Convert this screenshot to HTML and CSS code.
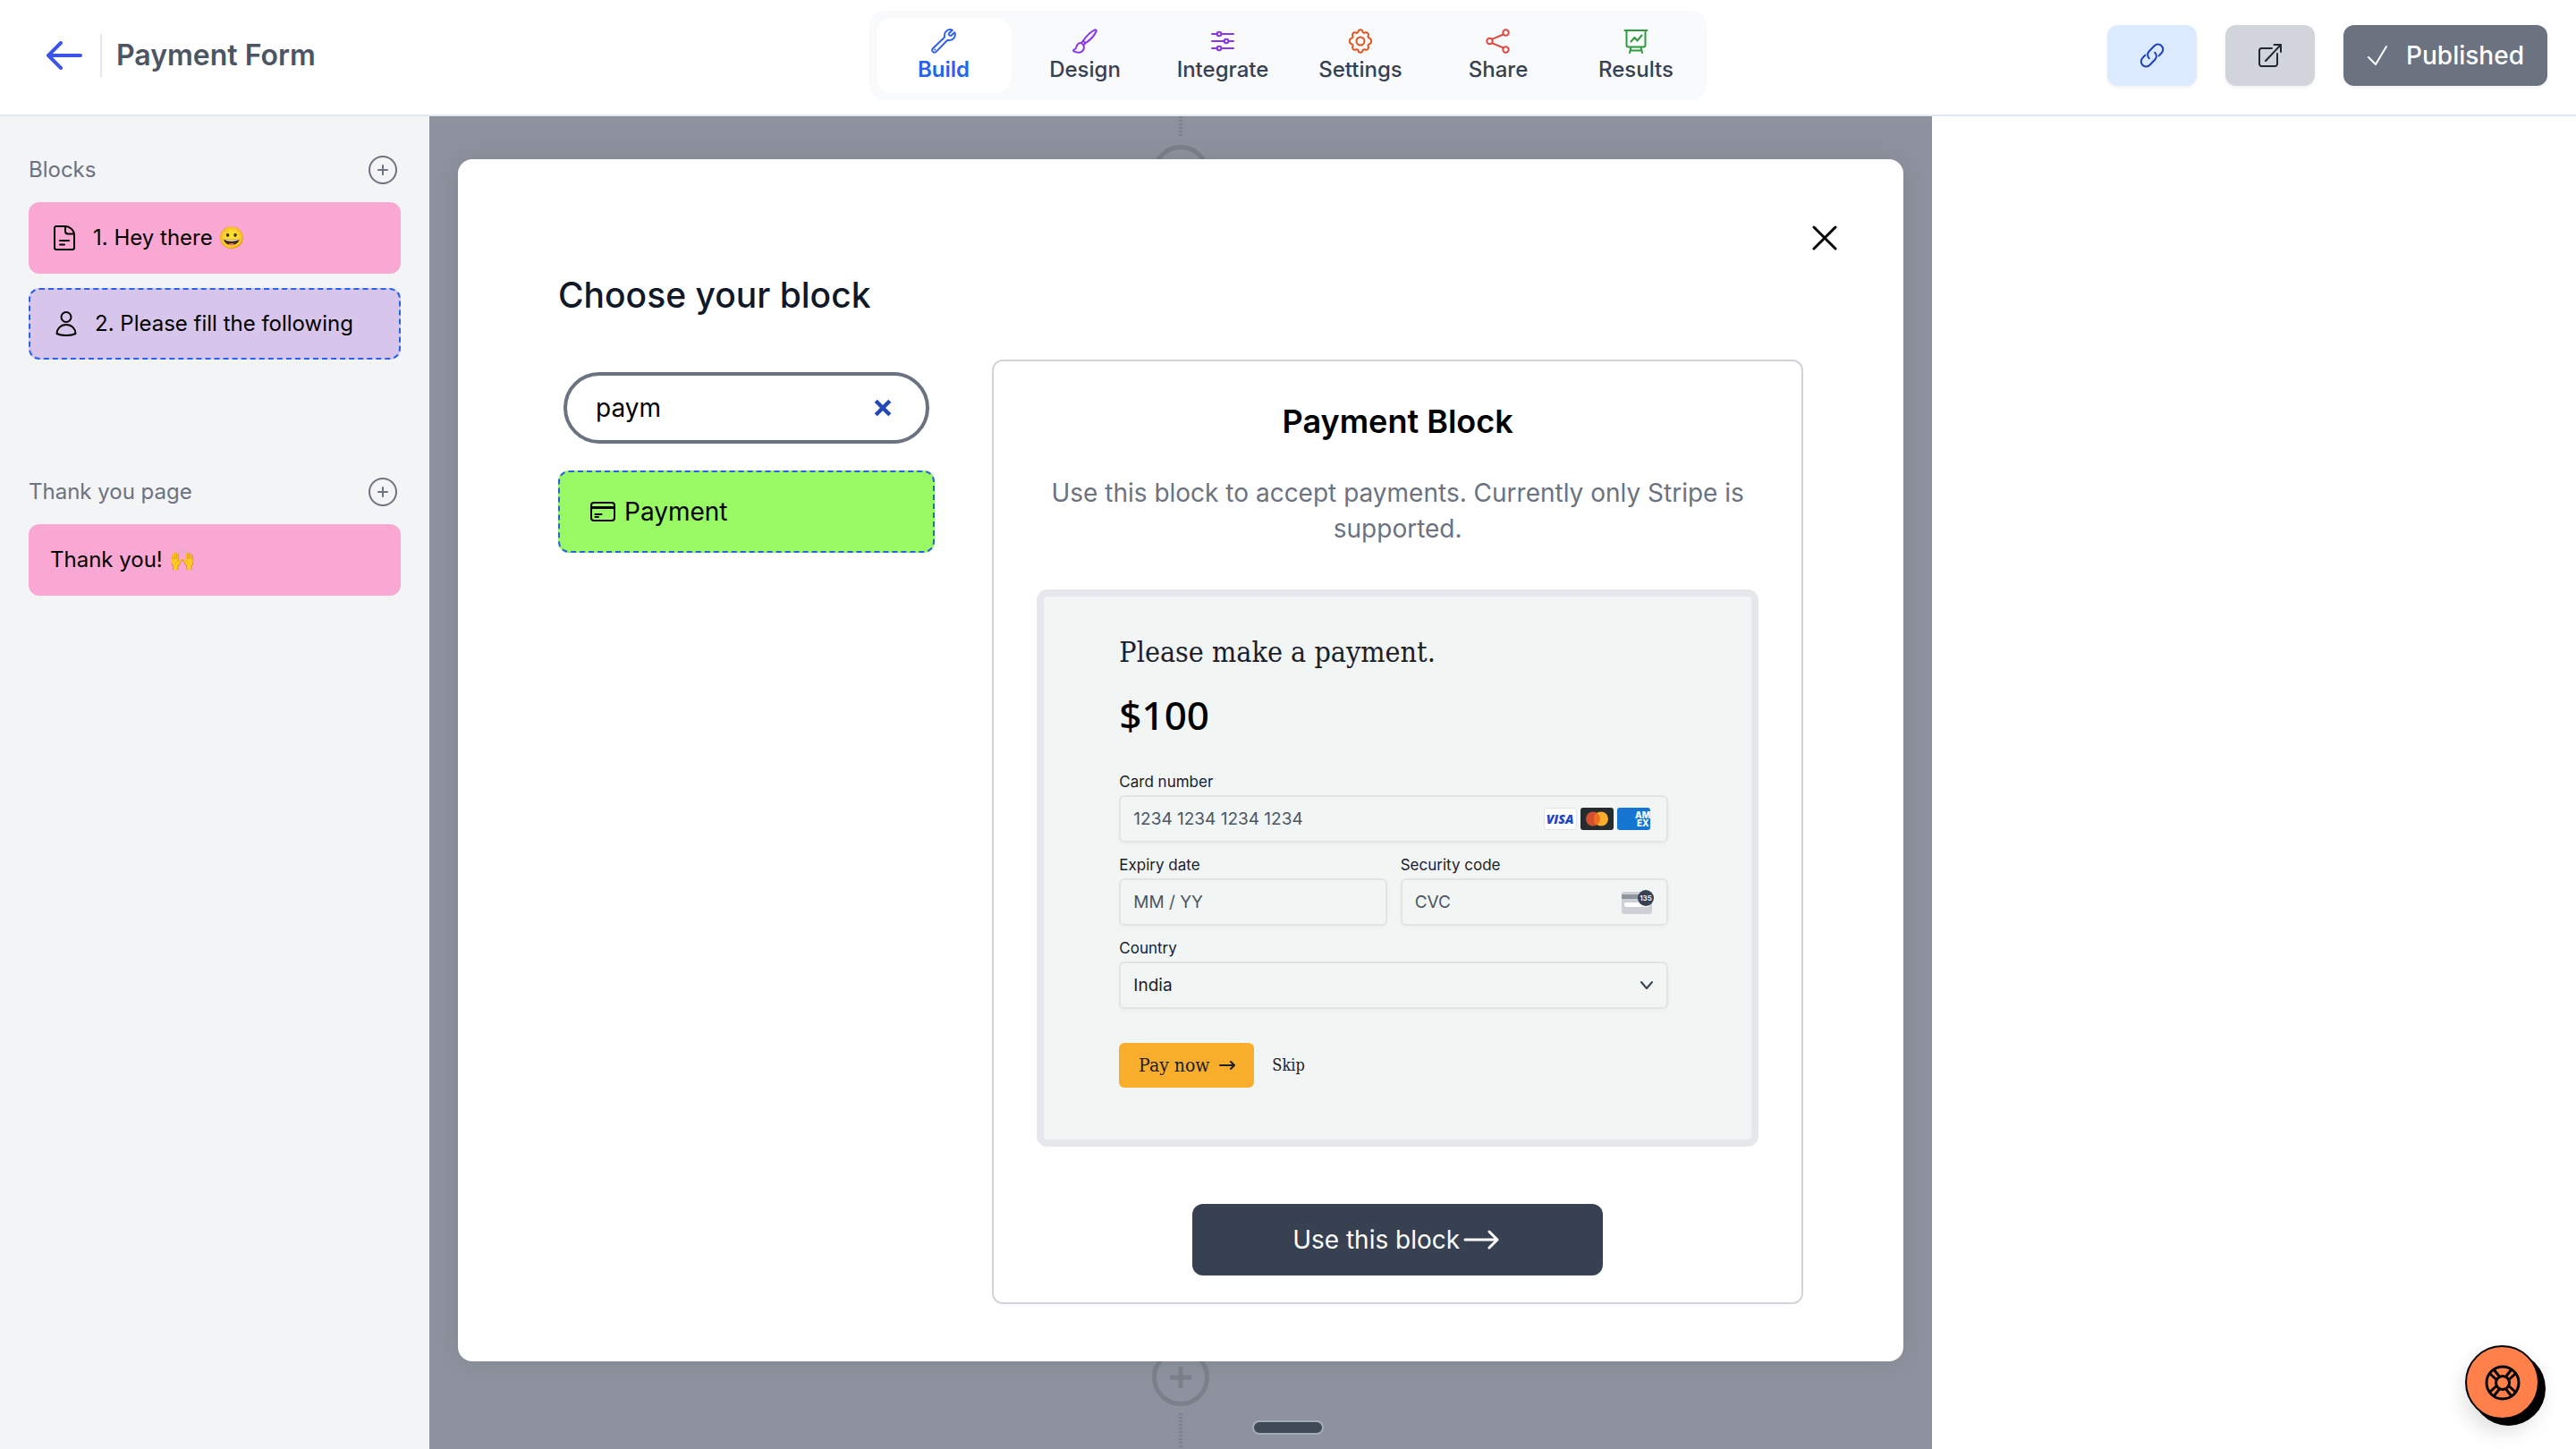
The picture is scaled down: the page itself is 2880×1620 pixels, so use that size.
FILE: index.html
```html
<!DOCTYPE html>
<html lang="en">
<head>
<meta charset="utf-8">
<meta name="viewport" content="width=device-width, initial-scale=1">
<title>Payment Form</title>
<link rel="stylesheet" href="styles.css">
</head>
<body>
<header class="topbar">
  <div class="crumb">
    <a class="back" href="#" aria-label="Back"><svg width="40" height="32" viewBox="0 0 40 32" fill="none" stroke="currentColor" stroke-width="4" stroke-linecap="round" stroke-linejoin="round"><path d="M16 2 2 16l14 14M2 16h36"/></svg></a>
    <h1 class="form-name">Payment Form</h1>
  </div>
  <nav class="tabs">
    <a class="tab active" href="#"><svg class="ico blue" viewBox="0 0 28 28"><path d="M23.8 1.7A6.3 6.3 0 0 0 15 8.500c.1.700-.1 1.300-.6 1.800L1.900 22.200a2.600 2.600 0 0 0 3.700 3.700L17.600 13.500c.5-.5 1.100-.7 1.800-.6a6.300 6.300 0 0 0 6.900-8.700l-3.600 3.400c-.6.600-1.400.500-2 0l-.5-.5c-.5-.6-.5-1.400 0-2z"/><path d="M4.300 23.500h.1"/></svg>Build</a>
    <a class="tab" href="#"><svg class="ico purple" viewBox="0 0 28 28"><path d="M12 13.500C16 8 21 3.300 25 1.400c1.100-.4 2 .5 1.600 1.600C24.700 7.500 20 12.500 14.600 16.300M12 13.500l2.600 2.800M12 13.500l-2 2.600 2.200 2.300 2.400-2.100M10 16.100c-2.500-.5-4.700 1-5.300 3.500-.4 2-1.200 3.300-3.100 4.100-.8.400-.7 1.200 0 1.600 3.300 1.800 7.400 1.900 9.600-.3 1.800-1.800 2.100-4.200 1-6.600z"/></svg>Design</a>
    <a class="tab" href="#"><svg class="ico purple" viewBox="0 0 28 28"><path d="M2 6h6M12.500 6H26M2 14h14M20.500 14H26M2 22h6M12.500 22H26"/><circle cx="10" cy="6" r="2.300"/><circle cx="18" cy="14" r="2.300"/><circle cx="10" cy="22" r="2.300"/></svg>Integrate</a>
    <a class="tab" href="#"><svg class="ico orange" viewBox="0 0 28 28"><path d="M11.600 3.100C12.100.6 15.900.6 16.400 3.100c.3 1.400 1.400 2 2.700 1.400 2.400-1.100 4.500 1 3.600 3.400-.5 1.400.1 2.600 1.500 3 2.500.6 2.500 5.600 0 6.200-1.400.4-2 1.600-1.500 3 .9 2.400-1.200 4.500-3.600 3.400-1.300-.6-2.400 0-2.700 1.400-.5 2.500-4.300 2.500-4.800 0-.3-1.400-1.400-2-2.700-1.400-2.400 1.100-4.500-1-3.600-3.400.5-1.400-.1-2.600-1.500-3-2.500-.6-2.500-5.600 0-6.200 1.400-.4 2-1.600 1.500-3-.9-2.400 1.200-4.500 3.600-3.400 1.300.6 2.400 0 2.700-1.400z"/><circle cx="14" cy="14" r="4.500"/></svg>Settings</a>
    <a class="tab" href="#"><svg class="ico red" viewBox="0 0 28 28"><circle cx="4.500" cy="14" r="3.200"/><circle cx="22.500" cy="4.500" r="3.200"/><circle cx="22.500" cy="23.500" r="3.200"/><path d="M7 11.800 19.800 6.500M7 16.200l12.800 5.300"/></svg>Share</a>
    <a class="tab" href="#"><svg class="ico green" viewBox="0 0 28 28"><path d="M1.500 2h25M3.500 2v16.500a2 2 0 0 0 2 2h17a2 2 0 0 0 2-2V2M8.500 20.500 7 27M19.500 20.500 21 27M8 24.500h12M8.500 14.500l4-4.500 3 3.500 5-6"/></svg>Results</a>
  </nav>
  <div class="actions">
    <button class="btn btn-link" aria-label="Copy link"><svg width="28" height="28" viewBox="0 0 28 28" fill="none" stroke="currentColor" stroke-width="2" stroke-linecap="round" stroke-linejoin="round"><path d="M10.800 17.200a5.600 5.600 0 0 1 0-8l5.800-6a5.600 5.600 0 0 1 8 8l-3 3.200"/><path d="M17.200 10.800a5.600 5.600 0 0 1 0 8l-5.800 6a5.600 5.600 0 0 1-8-8l3-3.200"/></svg></button>
    <button class="btn btn-open" aria-label="Open form"><svg width="28" height="28" viewBox="0 0 28 28" fill="none" stroke="currentColor" stroke-width="2" stroke-linecap="round" stroke-linejoin="round"><path d="M16 6H4.500A2.500 2.500 0 0 0 2 8.500v15A2.500 2.500 0 0 0 4.500 26h15a2.500 2.500 0 0 0 2.500-2.500V12M9 20 26 2M18.500 2H26v8"/></svg></button>
    <button class="btn btn-published"><svg width="24" height="24" viewBox="0 0 24 24" fill="none" stroke="currentColor" stroke-width="2" stroke-linecap="round" stroke-linejoin="round"><path d="m2 14 8 8L22 2"/></svg>Published</button>
  </div>
</header>

<div class="workspace">
  <aside class="sidebar">
    <section class="group">
      <div class="group-head"><h2>Blocks</h2><button class="add" aria-label="Add block"><svg width="34" height="34" viewBox="0 0 34 34" fill="none" stroke="currentColor" stroke-width="2" stroke-linecap="round"><circle cx="17" cy="17" r="15"/><path d="M17 12v10M12 17h10"/></svg></button></div>
      <a class="item pink" href="#"><svg class="item-ico" viewBox="0 0 24 28"><path d="M13 1H3a2 2 0 0 0-2 2v22a2 2 0 0 0 2 2h18a2 2 0 0 0 2-2V10.500C23 5.500 18 1 13 1v5.500A3 3 0 0 0 16 9.500h6.800M7 17h10M7 21.500h5"/></svg>1. Hey there 😀</a>
      <a class="item violet" href="#"><svg class="item-ico" viewBox="0 0 24 28"><circle cx="12" cy="6.500" r="5.500"/><path d="M1.500 25c0-5 4-10 10.500-10s10.500 5 10.500 10c-5.500 2.700-15.500 2.700-21 0z"/></svg>2. Please fill the following</a>
    </section>
    <section class="group">
      <div class="group-head"><h2>Thank you page</h2><button class="add" aria-label="Add thank you page"><svg width="34" height="34" viewBox="0 0 34 34" fill="none" stroke="currentColor" stroke-width="2" stroke-linecap="round"><circle cx="17" cy="17" r="15"/><path d="M17 12v10M12 17h10"/></svg></button></div>
      <a class="item pink" href="#">Thank you! 🙌</a>
    </section>
  </aside>

  <main class="canvas">
    <div class="flow flow-top"><span class="line line-top"></span><span class="node"></span></div>
    <div class="flow flow-bottom"><span class="node"><svg width="24" height="24" viewBox="0 0 24 24" fill="none" stroke="currentColor" stroke-width="5" stroke-linecap="round"><path d="M12 2v20M2 12h20"/></svg></span><span class="line line-bottom"></span></div>
    <span class="handle"></span>

    <div class="modal" role="dialog" aria-labelledby="modal-title">
      <button class="close" aria-label="Close"><svg width="28" height="28" viewBox="0 0 28 28" fill="none" stroke="currentColor" stroke-width="3" stroke-linecap="round"><path d="m2 2 24 24M26 2 2 26"/></svg></button>
      <h2 class="modal-title" id="modal-title">Choose your block</h2>
      <div class="modal-grid">
        <div class="picker">
          <div class="search">
            <input type="text" value="paym" aria-label="Search blocks">
            <button class="clear" aria-label="Clear search"><svg width="20" height="20" viewBox="0 0 18 18" fill="none" stroke="currentColor" stroke-width="4"><path d="m2 2 14 14M16 2 2 16"/></svg></button>
          </div>
          <button class="choice"><svg width="28" height="22" viewBox="0 0 28 22" fill="none" stroke="currentColor" stroke-width="2" stroke-linecap="round"><rect x="1" y="1" width="26" height="20" rx="3"/><path d="M1 6.500h26" stroke-width="3" stroke-linecap="butt"/><path d="M5.500 14h7M5.500 17h3.500"/></svg>Payment</button>
        </div>

        <section class="detail">
          <h3 class="detail-title">Payment Block</h3>
          <p class="detail-text">Use this block to accept payments. Currently only Stripe is supported.</p>
          <form class="preview">
            <h4 class="pay-title">Please make a payment.</h4>
            <p class="amount">$100</p>
            <div class="fields">
              <div class="field wide">
                <label for="card">Card number</label>
                <div class="box">
                  <input id="card" type="text" placeholder="1234 1234 1234 1234">
                  <span class="brands">
                    <svg width="37" height="25" viewBox="0 0 37 25"><rect x=".5" y=".5" width="36" height="24" rx="3" fill="#fff" stroke="#e3e6e8"/><text x="18" y="18" text-anchor="middle" font-family="Open Sans, sans-serif" font-weight="800" font-style="italic" font-size="14" fill="#2443c4">VISA</text></svg>
                    <svg width="37" height="25" viewBox="0 0 37 25"><rect width="37" height="25" rx="3" fill="#252b2e"/><circle cx="14" cy="12.500" r="8" fill="#d4502f"/><circle cx="23" cy="12.500" r="8" fill="#f9ae2b"/><path d="M18.500 5.900a8 8 0 0 1 0 13.200 8 8 0 0 1 0-13.200z" fill="#ee6c23"/></svg>
                    <svg width="37" height="25" viewBox="0 0 37 25"><rect width="37" height="25" rx="3" fill="#1675d1"/><g font-family="Inter, sans-serif" font-weight="800" font-size="10" fill="#fff"><text x="20" y="12">AM</text><text x="22" y="21">EX</text></g></svg>
                  </span>
                </div>
              </div>
              <div class="field">
                <label for="expiry">Expiry date</label>
                <div class="box"><input id="expiry" type="text" placeholder="MM / YY"></div>
              </div>
              <div class="field">
                <label for="cvc">Security code</label>
                <div class="box">
                  <input id="cvc" type="text" placeholder="CVC">
                  <svg class="cvc-ico" width="36" height="28" viewBox="0 0 36 28"><rect y="2" width="34" height="25" rx="3" fill="#cdd0d6"/><path d="M0 5h34v5H0z" fill="#8f949e"/><rect x="3" y="14" width="28" height="5" rx="2" fill="#fff"/><circle cx="27" cy="9" r="9" fill="#374151"/><text x="27" y="12" text-anchor="middle" font-family="Inter, sans-serif" font-weight="600" font-size="8" fill="#fff">135</text></svg>
                </div>
              </div>
              <div class="field wide">
                <label for="country">Country</label>
                <div class="box">
                  <select id="country"><option>India</option></select>
                  <svg class="chevron" width="16" height="10" viewBox="0 0 16 10" fill="none" stroke="#374151" stroke-width="2" stroke-linecap="round" stroke-linejoin="round"><path d="m2 1 6 7 6-7"/></svg>
                </div>
              </div>
            </div>
            <div class="pay-row">
              <button type="button" class="pay">Pay now<svg width="18" height="12" viewBox="0 0 18 12" fill="none" stroke="currentColor" stroke-width="2" stroke-linecap="round" stroke-linejoin="round"><path d="M1 6h16M13 2l4 4-4 4"/></svg></button>
              <a class="skip" href="#">Skip</a>
            </div>
          </form>
          <button class="use">Use this block<svg width="40" height="22" viewBox="0 0 40 22" fill="none" stroke="currentColor" stroke-width="3" stroke-linecap="round" stroke-linejoin="round"><path d="M2 11h36M29 2l9 9-9 9"/></svg></button>
        </section>
      </div>
    </div>
  </main>

  <aside class="inspector"></aside>
</div>

<button class="help" aria-label="Help"><svg width="40" height="40" viewBox="0 0 40 40" fill="none" stroke="currentColor" stroke-width="3"><circle cx="20" cy="20" r="18"/><circle cx="20" cy="20" r="7.500"/><path d="m12.500 16-6.500-6M16 12.500 10 5M24 12.500 30 5M27.500 16l6.500-6M27.500 24l6.500 6M24 27.500l6 7.500M16 27.500 10 35M12.500 24 6 30"/></svg></button>
</body>
</html>
```
FILE: styles.css
```css
*, *::before, *::after { box-sizing: border-box; }
body { margin: 0; min-height: 100vh; display: flex; flex-direction: column; overflow-x: hidden; background: #fff; color: #000; font-family: Inter, "Liberation Sans", sans-serif; font-size: 24px; line-height: 32px; }
h1, h2, h3, h4, p { margin: 0; font-weight: 400; }
a { color: inherit; text-decoration: none; }
button, input, select { font: inherit; color: inherit; border: 0; padding: 0; background: none; }
svg { display: block; flex: none; }

/* Top bar */
.topbar { display: grid; grid-template-columns: 1fr auto 1fr; align-items: center; height: 130px; padding: 0 32px 4px; border-bottom: 2px solid #e2e8f0; }
.crumb { display: flex; align-items: center; padding-left: 20px; gap: 20px; }
.back { color: #3b55e6; }
.form-name { border-left: 2px solid #e2e8f0; padding-left: 16px; font-size: 32px; line-height: 48px; font-weight: 600; color: #4b5563; }
.tabs { display: flex; gap: 4px; width: 936px; padding: 8px 4px 8px 8px; border-radius: 16px; background: #f9fafc; }
.tab { flex: 1; display: flex; flex-direction: column; align-items: center; gap: 2px; height: 84px; padding-top: 12px; border-radius: 16px; font-weight: 500; color: #374151; }
.tab.active { margin-right: 4px; background: #fff; color: #2563eb; font-weight: 600; }
.ico { width: 28px; height: 28px; fill: none; stroke: currentColor; stroke-width: 2; stroke-linecap: round; stroke-linejoin: round; }
.blue { color: #2f62e8; }
.purple { color: #8b35ea; }
.orange { color: #e0531c; }
.red { color: #dc4a41; }
.green { color: #2f9a3e; }
.actions { display: flex; justify-content: flex-end; gap: 32px; }
.btn { display: flex; align-items: center; justify-content: center; width: 100px; height: 68px; border-radius: 12px; box-shadow: 0 2px 4px rgba(0, 0, 0, .06); }
.btn-link { background: #dbeafe; color: #1d40bf; }
.btn-open { background: #d1d5db; color: #1f292e; }
.btn-published { width: 228px; gap: 20px; background: #6b7280; color: #fff; font-size: 28px; font-weight: 500; }

/* Columns */
.workspace { flex: 1; display: grid; grid-template-columns: 2fr 7fr 3fr; }
.sidebar { display: flex; flex-direction: column; gap: 128px; padding: 40px 32px; background: #f3f4f6; }
.group { display: flex; flex-direction: column; gap: 16px; }
.group-head { display: flex; align-items: center; justify-content: space-between; height: 40px; color: #6b7280; }
.group-head h2 { font-size: 24px; }
.add { margin-right: 3px; }
.item { display: flex; align-items: center; gap: 20px; height: 80px; padding: 0 24px; border-radius: 12px; }
.pink { background: #f9a8d4; }
.violet { border: 2px dashed #2563eb; background: #d8c5ec; }
.item-ico { width: 24px; height: 28px; margin-left: 4px; fill: none; stroke: currentColor; stroke-width: 2; stroke-linecap: round; stroke-linejoin: round; }
.inspector { background: #fff; }

/* Canvas behind the dialog */
.canvas { position: relative; padding: 48px 32px 98px; background: #8d929e; overflow: hidden; }
.flow { position: absolute; left: 0; right: 0; display: flex; flex-direction: column; align-items: center; gap: 8px; color: #7b808b; }
.flow-top { top: 0; }
.flow-bottom { bottom: 0; }
.line { width: 4px; background: repeating-linear-gradient(#7b808b 0 2px, transparent 2px 4px); }
.line-top { height: 24px; }
.line-bottom { height: 40px; }
.node { display: flex; align-items: center; justify-content: center; width: 64px; height: 64px; border: 5px solid #7b808b; border-radius: 50%; }
.handle { position: absolute; left: 922px; bottom: 18px; width: 76px; height: 12px; border-radius: 6px; background: #3f4857; box-shadow: 0 0 0 2px #a6aab3; }

/* Dialog */
.modal { position: relative; padding: 128px 112px 64px; border-radius: 16px; background: #fff; box-shadow: 0 0 32px -4px rgba(0, 0, 0, .12); }
.close { position: absolute; top: 74px; right: 74px; }
.modal-title { margin-bottom: 48px; font-size: 39px; line-height: 48px; font-weight: 500; color: #111827; }
.modal-grid { display: grid; grid-template-columns: repeat(12, 1fr); gap: 64px; }
.picker { grid-column: span 4; display: flex; flex-direction: column; gap: 30px; padding-top: 14px; }
.search { display: flex; align-items: center; height: 80px; margin: 0 6px; padding: 0 38px 0 32px; border: 4px solid #6b7280; border-radius: 40px; font-size: 28px; }
.search input { flex: 1; min-width: 0; outline: 0; }
.clear { color: #2448b5; }
.choice { display: flex; align-items: center; gap: 10px; height: 92px; padding-left: 34px; border: 2px dashed #2563eb; border-radius: 12px; background: #98f964; font-size: 28px; }
.detail { grid-column: span 8; display: flex; flex-direction: column; align-items: center; padding: 47px 48px 30px; border: 2px solid #d1d5db; border-radius: 12px; }
.detail-title { margin-bottom: 40px; font-size: 36px; line-height: 40px; font-weight: 600; }
.detail-text { margin-bottom: 48px; font-size: 28px; line-height: 40px; text-align: center; color: #6b7280; }
.use { display: flex; align-items: center; justify-content: center; gap: 4px; width: 459px; height: 80px; margin-top: 64px; padding-right: 4px; border-radius: 12px; background: #374151; color: #fff; font-size: 28px; }

/* Payment form preview */
.preview { align-self: stretch; padding: 38px 93px 58px 84px; border: 8px solid #e5e7eb; border-radius: 12px; background: #f1f5f4; color: #1a202c; }
.pay-title { margin-bottom: 18px; font-family: "DejaVu Serif Condensed", "DejaVu Serif", serif; font-size: 32px; line-height: 48px; white-space: nowrap; }
.amount { margin-bottom: 35px; font-family: "Noto Sans", sans-serif; font-size: 44px; line-height: 56px; font-weight: 500; color: #000; }
.fields { display: grid; grid-template-columns: repeat(2, minmax(0, 1fr)); gap: 13px 15px; margin-bottom: 38px; }
.field { display: flex; flex-direction: column; gap: 3px; }
.wide { grid-column: span 2; }
.field label { font-size: 17px; line-height: 24px; }
.box { display: flex; align-items: center; height: 53px; padding: 0 14px; border: 2px solid #e0e4e5; border-radius: 6px; box-shadow: 0 2px 4px rgba(0, 0, 0, .03); font-size: 19px; }
.box input, .box select { flex: 1; min-width: 0; outline: 0; appearance: none; }
.box input::placeholder { color: #4b5563; opacity: 1; }
.brands { display: flex; gap: 4px; margin-right: 4px; }
.pay-row { display: flex; align-items: center; gap: 20px; font-family: "DejaVu Serif Condensed", "DejaVu Serif", serif; }
.pay { display: flex; align-items: center; justify-content: center; gap: 10px; width: 151px; height: 50px; border-radius: 6px; background: #f9ae2b; font-size: 21px; }
.skip { font-size: 18px; }

/* Help */
.help { position: fixed; right: 41px; bottom: 33px; display: flex; align-items: center; justify-content: center; width: 83px; height: 83px; border: 2px solid #000; border-radius: 50%; background: #ff804a; color: #000; box-shadow: 7px 7px 0 #000, 0 12px 24px rgba(0, 0, 0, .15); }
```
